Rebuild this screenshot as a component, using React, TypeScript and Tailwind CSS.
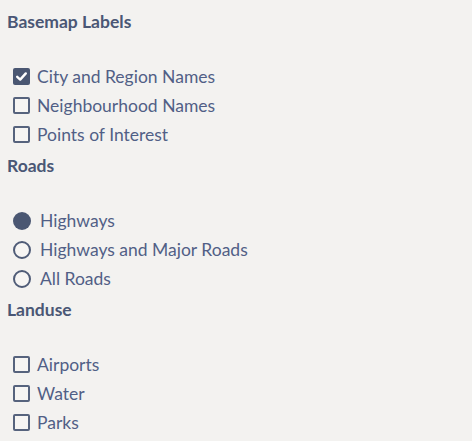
import React from "react";

const font = { fontFamily: "Lato, 'Noto Sans', sans-serif" };

function Check({ checked }: { checked?: boolean }) {
  return checked ? (
    <span className="flex h-[17px] w-[17px] items-center justify-center rounded-[2px] bg-[#4a5772]">
      <svg width="13" height="13" viewBox="0 0 13 13">
        <path d="M2.2 6.8 L5.2 9.6 L10.8 3.4" fill="none" stroke="#ffffff" strokeWidth="2.4" strokeLinecap="round" strokeLinejoin="round" />
      </svg>
    </span>
  ) : (
    <span className="block h-[17px] w-[17px] rounded-[2px] border-2 border-[#56637d] bg-[#f6f5f3]" />
  );
}

function Radio({ checked }: { checked?: boolean }) {
  return checked ? (
    <span className="block h-[18px] w-[18px] rounded-full bg-[#4a5772]" />
  ) : (
    <span className="block h-[18px] w-[18px] rounded-full border-2 border-[#4f5c77] bg-[#f6f5f3]" />
  );
}

function Heading({ children, first }: { children: React.ReactNode; first?: boolean }) {
  return (
    <div className={`${first ? "" : "mt-[6px]"} h-[22px] pl-[7px] text-[17.5px] font-bold leading-[22px] text-[#4a5775]`}>
      {children}
    </div>
  );
}

function Row({ kind, checked, label }: { kind: "c" | "r"; checked?: boolean; label: string }) {
  return (
    <div className="flex h-[29px] items-center pl-[13px]">
      {kind === "c" ? <Check checked={checked} /> : <Radio checked={checked} />}
      <span className={`${kind === "c" ? "ml-[7px]" : "ml-[9px]"} text-[17.5px] leading-[29px] text-[#515f86]`}>{label}</span>
    </div>
  );
}

export default function App() {
  return (
    <div className="h-[441px] w-[472px] overflow-hidden bg-[#f3f2f0] pt-[11px]" style={font}>
      <Heading first>Basemap Labels</Heading>
      <div className="mt-[29px]">
        <Row kind="c" checked label="City and Region Names" />
        <Row kind="c" label="Neighbourhood Names" />
        <Row kind="c" label="Points of Interest" />
      </div>
      <Heading>Roads</Heading>
      <div className="mt-[29px]">
        <Row kind="r" checked label="Highways" />
        <Row kind="r" label="Highways and Major Roads" />
        <Row kind="r" label="All Roads" />
      </div>
      <Heading>Landuse</Heading>
      <div className="mt-[29px]">
        <Row kind="c" label="Airports" />
        <Row kind="c" label="Water" />
        <Row kind="c" label="Parks" />
      </div>
    </div>
  );
}
